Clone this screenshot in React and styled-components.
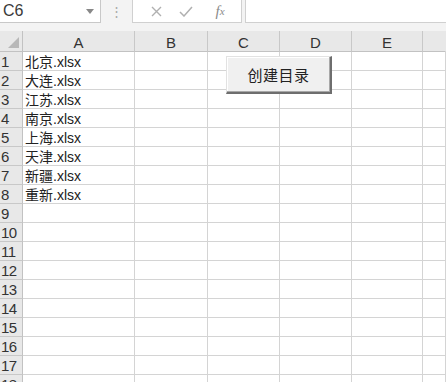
import React from "react";
import styled, { createGlobalStyle } from "styled-components";

const Global = createGlobalStyle`
  html, body { margin: 0; padding: 0; background: #fff; overflow: hidden; }
  body { font-family: "Liberation Sans", "Noto Sans CJK SC", sans-serif; }
`;

const Page = styled.div`
  width: 446px;
  height: 382px;
  overflow: hidden;
  background: #fff;
  display: flex;
  flex-direction: column;
`;

const Toolbar = styled.div`
  height: 31px;
  flex: none;
  background: #f3f3f3;
  display: flex;
  align-items: flex-start;
  box-sizing: border-box;
`;

const NameBox = styled.div`
  width: 101px;
  height: 23px;
  box-sizing: border-box;
  background: #fff;
  border: 1px solid #c8c8c8;
  border-top: none;
  border-left: none;
  display: flex;
  align-items: center;
  justify-content: space-between;
  padding: 0 6px 0 3px;
  font-size: 16px;
  color: #3a3a3a;
`;

const Caret = styled.span`
  width: 0;
  height: 0;
  border-left: 4px solid transparent;
  border-right: 4px solid transparent;
  border-top: 5px solid #888;
  margin-top: 1px;
`;

const Dots = styled.div`
  width: 31px;
  height: 23px;
  display: flex;
  align-items: center;
  justify-content: center;
  color: #a8a8a8;
  font-size: 13px;
`;

const FxBox = styled.div`
  width: 110px;
  height: 23px;
  box-sizing: border-box;
  background: #fff;
  border: 1px solid #d0d0d0;
  border-top: none;
  display: flex;
  align-items: center;
  padding-left: 12px;
`;

const FxIcon = styled.span`
  width: ${(p) => p.$w}px;
  display: flex;
  align-items: center;
  justify-content: center;
  color: #8a8a8a;
  font-family: "Liberation Serif", serif;
  font-style: italic;
  font-size: 15px;
`;

const FormulaInput = styled.div`
  flex: 1;
  margin-left: 3px;
  height: 23px;
  box-sizing: border-box;
  background: #fff;
  border: 1px solid #d0d0d0;
  border-top: none;
  border-right: none;
`;

const Sheet = styled.div`
  position: relative;
  flex: 1;
  display: grid;
  grid-template-columns: 23px 112px 73px 72px 72px 71px 1fr;
  grid-auto-rows: 19px;
  grid-template-rows: 21px;
  align-content: start;
`;

const Corner = styled.div`
  background: #e8e8e8;
  border-right: 1px solid #c2c2c2;
  border-bottom: 1px solid #c2c2c2;
  box-sizing: border-box;
  position: relative;
`;

const CornerTri = styled.div`
  position: absolute;
  right: 3px;
  bottom: 3px;
  width: 0;
  height: 0;
  border-left: 11px solid transparent;
  border-bottom: 11px solid #b8b8b8;
`;

const ColHead = styled.div`
  background: #e8e8e8;
  border-right: 1px solid ${(p) => (p.$last ? "transparent" : "#c8c8c8")};
  border-bottom: 1px solid #c2c2c2;
  box-sizing: border-box;
  display: flex;
  align-items: center;
  justify-content: center;
  font-size: 15px;
  color: #333;
  padding-top: 2px;
`;

const RowHead = styled.div`
  background: #e8e8e8;
  border-right: 1px solid #c2c2c2;
  border-bottom: 1px solid #c8c8c8;
  box-sizing: border-box;
  display: flex;
  align-items: center;
  padding-left: 1px;
  font-size: 15px;
  color: #333;
  letter-spacing: -0.5px;
`;

const Cell = styled.div`
  border-right: 1px solid #d4d4d4;
  border-bottom: 1px solid #d4d4d4;
  box-sizing: border-box;
  display: flex;
  align-items: center;
  padding-left: 2px;
  font-size: 14px;
  color: #222;
  white-space: nowrap;
  overflow: visible;
`;

const FloatButton = styled.button`
  position: absolute;
  left: 226px;
  top: 25px;
  width: 106px;
  height: 38px;
  box-sizing: border-box;
  background: #f0f0f0;
  border: 1px solid #e2e2e2;
  border-right: 2px solid #6e6e6e;
  border-bottom: 2px solid #6e6e6e;
  box-shadow: inset -1px -1px 0 #a8a8a8, inset 1px 1px 0 #fff;
  font-family: "Noto Sans CJK SC", sans-serif;
  font-size: 15px;
  color: #222;
  letter-spacing: 0.5px;
  padding: 0;
  cursor: default;
`;

const cols = ["A", "B", "C", "D", "E", ""];
const files = ["北京", "大连", "江苏", "南京", "上海", "天津", "新疆", "重新"];
const rows = Array.from({ length: 18 }, (_, i) => i + 1);

export default function App() {
  return (
    <Page>
      <Global />
      <Toolbar>
        <NameBox>
          <span>C6</span>
          <Caret />
        </NameBox>
        <Dots>⋮</Dots>
        <FxBox>
          <FxIcon $w={22}>
            <svg width="11" height="11" viewBox="0 0 11 11">
              <path d="M1 1 L10 10 M10 1 L1 10" stroke="#b0b0b0" strokeWidth="1.4" fill="none" />
            </svg>
          </FxIcon>
          <FxIcon $w={38}>
            <svg width="14" height="11" viewBox="0 0 14 11">
              <path d="M1 6 L5 10 L13 1" stroke="#b0b0b0" strokeWidth="1.5" fill="none" />
            </svg>
          </FxIcon>
          <FxIcon $w={30}>f<span style={{ fontSize: 11 }}>x</span></FxIcon>
        </FxBox>
        <FormulaInput />
      </Toolbar>
      <Sheet>
        <Corner>
          <CornerTri />
        </Corner>
        {cols.map((c, i) => (
          <ColHead key={i} $last={i === cols.length - 1}>
            {c}
          </ColHead>
        ))}
        {rows.map((r) => (
          <React.Fragment key={r}>
            <RowHead>{r}</RowHead>
            {cols.map((c, i) => (
              <Cell key={i}>{i === 0 && files[r - 1] ? `${files[r - 1]}.xlsx` : ""}</Cell>
            ))}
          </React.Fragment>
        ))}
        <FloatButton>创建目录</FloatButton>
      </Sheet>
    </Page>
  );
}
